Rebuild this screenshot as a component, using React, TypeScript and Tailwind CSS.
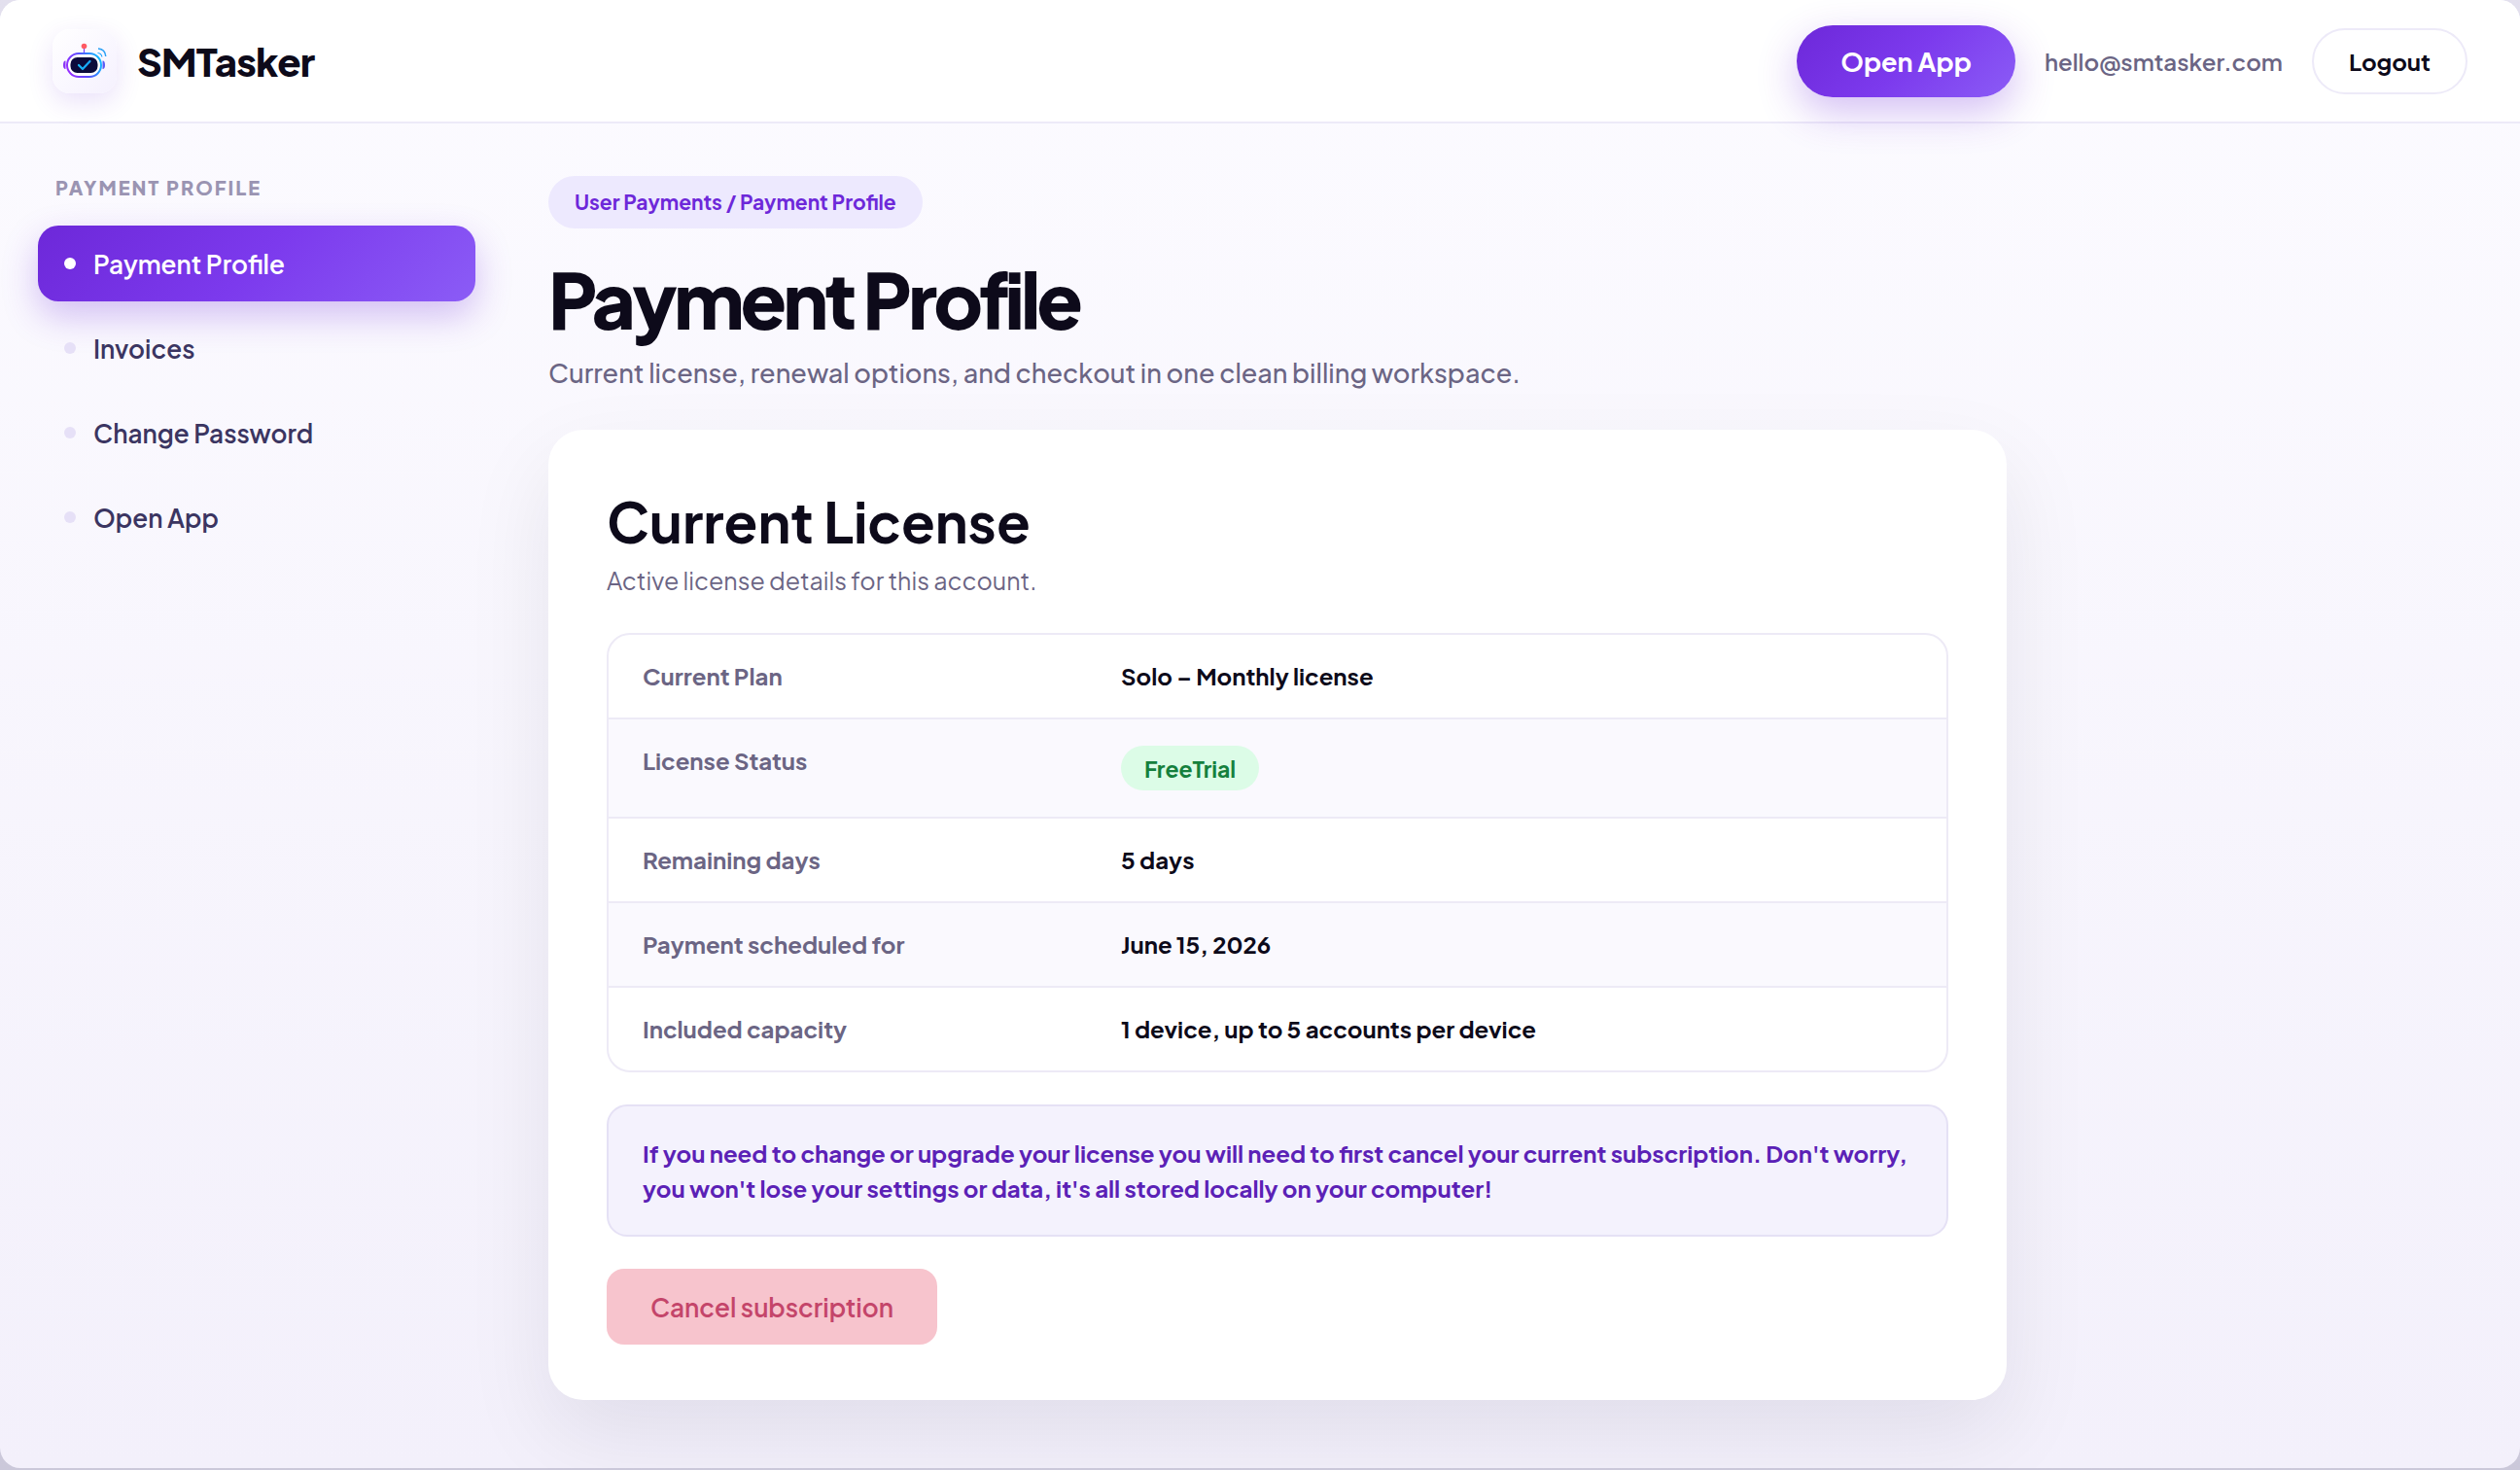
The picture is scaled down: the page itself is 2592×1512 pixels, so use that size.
import React from "react";

const NAV = ["Payment Profile", "Invoices", "Change Password", "Open App"];

const ROWS = [
  { label: "Current Plan", value: "Solo – Monthly license" },
  { label: "License Status", value: "FreeTrial", badge: true },
  { label: "Remaining days", value: "5 days" },
  { label: "Payment scheduled for", value: "June 15, 2026" },
  { label: "Included capacity", value: "1 device, up to 5 accounts per device" },
];

function RobotLogo() {
  return (
    <svg viewBox="0 0 46 38" className="h-[38px] w-[46px]" fill="none" aria-hidden="true">
      <defs>
        <linearGradient id="body" x1="4" y1="30" x2="42" y2="14" gradientUnits="userSpaceOnUse">
          <stop offset="0" stopColor="#a02bff" />
          <stop offset="0.45" stopColor="#5b4bff" />
          <stop offset="1" stopColor="#00d0ff" />
        </linearGradient>
        <linearGradient id="check" x1="16" y1="20" x2="30" y2="28" gradientUnits="userSpaceOnUse">
          <stop offset="0" stopColor="#19c3f5" />
          <stop offset="1" stopColor="#1597ff" />
        </linearGradient>
      </defs>
      <path d="M22.500 4v7" stroke="#7a3bff" strokeWidth="1.200" />
      <circle cx="22.500" cy="3.500" r="2.800" fill="#ff5a63" />
      <path d="M3.500 18.500C1.500 18.500 1 20.500 1 22.800s.5 4.300 2.500 4.300z" fill="#8a35f5" />
      <path d="M41.500 18.500c2 0 2.500 2 2.500 4.300s-.5 4.300-2.500 4.300z" fill="#5a5cf5" />
      <rect x="5" y="11" width="35" height="24" rx="12" fill="#fff" stroke="url(#body)" strokeWidth="2" />
      <rect x="8.500" y="15" width="28" height="16" rx="7" fill="#0b0b3b" />
      <path d="m17 23 4 4 7.500-8" stroke="url(#check)" strokeWidth="2.200" strokeLinecap="round" strokeLinejoin="round" />
      <path d="M36.500 10.500c2.500.3 4 1.800 4.400 4" stroke="#19a5ff" strokeWidth="1.200" />
      <path d="M37 6c4.500.4 7.400 3.400 7.800 8" stroke="#2aa0f5" strokeWidth="1.500" />
    </svg>
  );
}

function Header() {
  return (
    <header className="flex items-center justify-between border-b-2 border-[#edeaf8] bg-white px-[54px] pt-[26px] pb-[25px]">
      <a href="#home" className="flex items-center gap-[21px]">
        <span className="flex size-[66px] items-center justify-center rounded-[18px] bg-gradient-to-br from-white to-[#f5f1fe] shadow-[0_9px_27px_rgba(109,40,217,0.14)]">
          <RobotLogo />
        </span>
        <span className="text-[40px] leading-[48px] font-extrabold tracking-[-0.02em]">SMTasker</span>
      </a>
      <div className="relative flex items-center gap-[30px]">
        <button
          type="button"
          className="h-[74px] rounded-full bg-[linear-gradient(135deg,#6d28d9_0%,#7c3aed_50%,#8b5cf6_100%)] px-[45px] text-[27px] font-bold text-white shadow-[0_15px_42px_rgba(109,40,217,0.3)]"
        >
          Open App
        </button>
        <span className="text-[24px] font-semibold text-[#6b6584]">hello@smtasker.com</span>
        <button type="button" className="h-[68px] rounded-full border-2 border-[#edeaf8] bg-white px-[36px] text-[24px] font-bold">
          Logout
        </button>
      </div>
    </header>
  );
}

function Sidebar() {
  return (
    <nav aria-label="Payment profile" className="w-[450px] shrink-0">
      <p className="px-[18px] text-[20px] leading-[30px] font-extrabold tracking-widest text-[#9a94b2] uppercase">Payment Profile</p>
      <ul className="mt-[24px] flex flex-col gap-[9px]">
        {NAV.map((item, i) => (
          <li key={item}>
            <a
              href="#section"
              aria-current={i === 0 ? "page" : undefined}
              className={
                i === 0
                  ? "flex h-[78px] items-center gap-[18px] rounded-[21px] bg-[linear-gradient(135deg,#6d28d9_0%,#7c3aed_50%,#8b5cf6_100%)] px-[27px] text-[26px] font-semibold text-white shadow-[0_15px_36px_rgba(109,40,217,0.28)]"
                  : "flex h-[78px] items-center gap-[18px] rounded-[21px] px-[27px] text-[26px] font-semibold text-[#3b3561]"
              }
            >
              <span className={i === 0 ? "size-3 rounded-full bg-white" : "size-3 rounded-full bg-[#e6e0f7]"} />
              {item}
            </a>
          </li>
        ))}
      </ul>
    </nav>
  );
}

function LicenseCard() {
  return (
    <section className="mt-[38px] rounded-[36px] bg-white px-[60px] pt-[58px] pb-[57px] shadow-[0_36px_90px_rgba(15,10,40,0.08)]">
      <h2 className="text-[57px] leading-[72px] font-bold">Current License</h2>
      <p className="mt-[4px] text-[25px] leading-[42px] text-[#6b6584]">Active license details for this account.</p>
      <div className="mt-[33px] overflow-hidden rounded-[24px] border-2 border-[#edeaf6]">
        <table className="w-full border-collapse text-left text-[24px] leading-[35px]">
          <tbody>
            {ROWS.map((row) => (
              <tr key={row.label} className="border-b-2 border-[#edeaf6] last:border-b-0 even:bg-[#faf9fe]">
                <th scope="row" className="w-[527px] py-[25px] pl-[35px] align-top font-bold text-[#6b6584]">
                  {row.label}
                </th>
                <td className="py-[25px] pr-[35px] align-top font-bold">
                  {row.badge ? (
                    <span className="my-[2px] inline-flex h-[46px] items-center rounded-full bg-[#dcfce7] px-[24px] align-top text-[23px] font-bold text-[#15803d]">
                      {row.value}
                    </span>
                  ) : (
                    row.value
                  )}
                </td>
              </tr>
            ))}
          </tbody>
        </table>
      </div>
      <p className="mt-[33px] rounded-[21px] border-2 border-[#e5e1f5] bg-[#f4f2fd] px-[35px] py-[30px] text-[24px] leading-[36px] font-bold text-[#5b21b6]">
        If you need to change or upgrade your license you will need to first cancel your current subscription. Don't worry, you
        won't lose your settings or data, it's all stored locally on your computer!
      </p>
      <button
        type="button"
        className="mt-[33px] h-[78px] rounded-[18px] bg-[#f7c4cd] px-[45px] text-[26px] font-semibold text-[#c4456a]"
      >
        Cancel subscription
      </button>
    </section>
  );
}

export default function App() {
  return (
    <div className="min-h-screen bg-gradient-to-b from-[#e3e0ee] to-[#cbc8da] pb-[2px] font-['Plus_Jakarta_Sans',Inter,sans-serif] text-[#0d0a1a]">
      <div className="flex min-h-[calc(100vh-2px)] flex-col overflow-hidden rounded-[21px] bg-gradient-to-b from-[#fcfbff] to-[#f3f0fb]">
        <Header />
        <div className="flex gap-[75px] px-[39px] pt-[51px] pb-[70px]">
          <Sidebar />
          <main className="max-w-[1500px] flex-1 pt-[3px]">
            <p className="inline-flex h-[54px] items-center rounded-full bg-[#ede9fe] px-[27px] text-[21px] font-bold text-[#6d28d9]">
              User Payments / Payment Profile
            </p>
            <h1 className="mt-[27px] text-[78px] leading-[90px] font-extrabold tracking-tighter">Payment Profile</h1>
            <p className="mt-[10px] text-[27px] leading-[42px] font-medium text-[#6b6584]">
              Current license, renewal options, and checkout in one clean billing workspace.
            </p>
            <LicenseCard />
          </main>
        </div>
      </div>
    </div>
  );
}
